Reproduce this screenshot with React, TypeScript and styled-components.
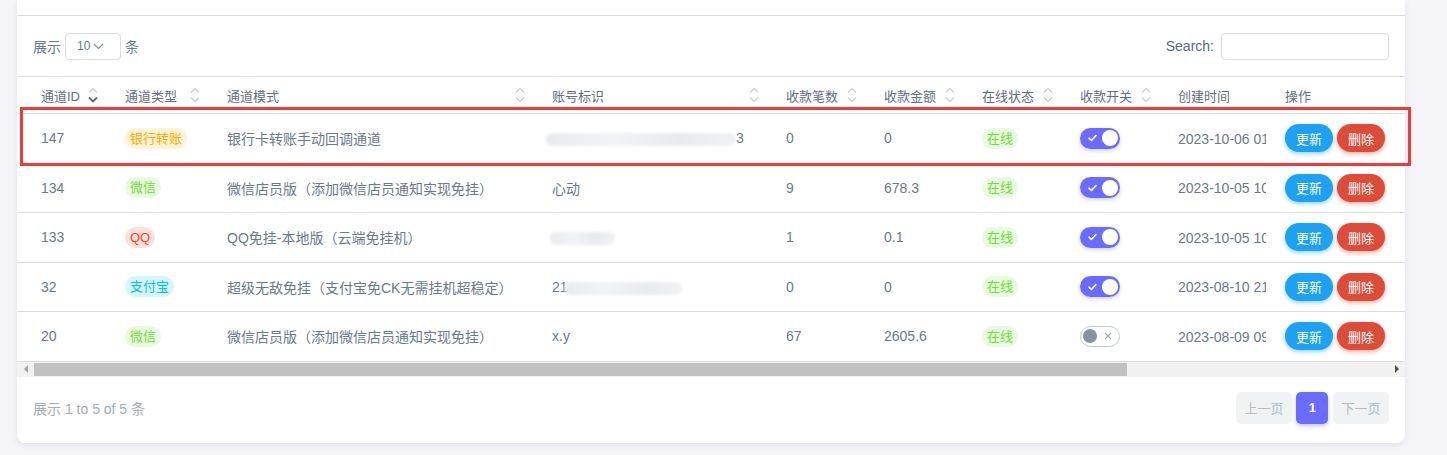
import React from "react";
import styled, { createGlobalStyle, css } from "styled-components";

const Global = createGlobalStyle`
  html, body { margin: 0; padding: 0; }
  body {
    background: #f5f5f9;
    font-family: "Liberation Sans", "Noto Sans CJK SC", sans-serif;
    color: #697a8d;
    -webkit-font-smoothing: antialiased;
  }
  * { box-sizing: border-box; }
`;

const Page = styled.div`
  position: relative;
  padding-left: 17px;
  height: 455px;
  overflow: hidden;
`;

const Card = styled.div`
  width: 1388px;
  background: #fff;
  border-radius: 0 0 8px 8px;
  box-shadow: 0 2px 6px 0 rgba(67, 89, 113, 0.12);
  overflow: hidden;
`;

const CardTop = styled.div`
  height: 16px;
  border-bottom: 1px solid #d9dee3;
`;

const Controls = styled.div`
  height: 61px;
  padding: 0 16px;
  display: flex;
  align-items: center;
  justify-content: space-between;
  border-bottom: 1px solid #d9dee3;
`;

const LengthLabel = styled.label`
  display: flex;
  align-items: center;
  gap: 4px;
  font-size: 14px;
  color: #697a8d;
`;

const SelectBox = styled.div`
  width: 56px;
  height: 27px;
  border: 1px solid #d9dee3;
  border-radius: 4px;
  display: flex;
  align-items: center;
  gap: 3px;
  padding-left: 11px;
  font-size: 12px;
  color: #697a8d;
`;

const SearchLabel = styled.label`
  display: flex;
  align-items: center;
  gap: 7px;
  font-size: 14px;
  color: #566a7f;
`;

const SearchInput = styled.input`
  width: 168px;
  height: 27px;
  border: 1px solid #d9dee3;
  border-radius: 4px;
  outline: none;
  padding: 0 8px;
  font: inherit;
`;

const TableScroll = styled.div`
  width: 100%;
  overflow: hidden;
`;

const Table = styled.table`
  width: 1720px;
  table-layout: fixed;
  border-collapse: separate;
  border-spacing: 0;
`;

const Th = styled.th<{ $sticky?: boolean }>`
  height: 37px;
  padding: 0 3px 0 24px;
  border-bottom: 1px solid #d9dee3;
  font-size: 13px;
  font-weight: normal;
  color: #5f6f82;
  text-align: left;
  white-space: nowrap;
  background: #fff;
  ${(p) =>
    p.$sticky &&
    css`
      position: sticky;
      right: 0;
      padding-left: 17px;
    `}
`;

const HeadInner = styled.div`
  display: flex;
  align-items: center;
  justify-content: space-between;
`;

const Td = styled.td<{ $sticky?: boolean }>`
  height: 49.5px;
  padding: 0 0 0 24px;
  border-bottom: 1px solid #d9dee3;
  font-size: 14px;
  color: #697a8d;
  white-space: nowrap;
  overflow: hidden;
  vertical-align: middle;
  background: #fff;
  ${(p) =>
    p.$sticky &&
    css`
      position: sticky;
      right: 0;
      padding-left: 17px;
    `}
`;

const TimeClip = styled.span`
  display: inline-block;
  max-width: 88px;
  overflow: hidden;
  vertical-align: middle;
  white-space: nowrap;
`;

type Tone = "warning" | "success" | "danger" | "info";
const tones: Record<Tone, { bg: string; fg: string }> = {
  warning: { bg: "#fff2d6", fg: "#ffab00" },
  success: { bg: "#e8fadf", fg: "#71dd37" },
  danger: { bg: "#ffe0db", fg: "#ff3e1d" },
  info: { bg: "#d7f5fc", fg: "#03c3ec" },
};

const Badge = styled.span<{ $tone: Tone }>`
  display: inline-flex;
  align-items: center;
  height: 21px;
  padding: 0 5px;
  border-radius: 11px;
  font-size: 13px;
  line-height: 1;
  background: ${(p) => tones[p.$tone].bg};
  color: ${(p) => tones[p.$tone].fg};
`;

const Smudge = styled.span<{ $w: number; $shift?: number }>`
  display: inline-block;
  vertical-align: middle;
  width: ${(p) => p.$w}px;
  height: 13px;
  margin-left: ${(p) => p.$shift ?? 0}px;
  border-radius: 6px;
  background: linear-gradient(
    90deg,
    rgba(228, 231, 235, 0.85),
    rgba(240, 242, 245, 0.95) 35%,
    rgba(231, 233, 237, 0.95) 70%,
    rgba(238, 240, 243, 0.9)
  );
  filter: blur(1.5px);
`;

const Switch = styled.span<{ $on: boolean }>`
  display: inline-flex;
  align-items: center;
  justify-content: space-between;
  width: 40px;
  height: 21px;
  border-radius: 11px;
  vertical-align: middle;
  ${(p) =>
    p.$on
      ? css`
          background: #696cff;
          padding: 0 2px 0 8px;
          box-shadow: 0 2px 4px 0 rgba(105, 108, 255, 0.3);
        `
      : css`
          background: #fff;
          border: 1px solid #c3c9d1;
          padding: 0 7px 0 2px;
        `}
`;

const Knob = styled.span<{ $on: boolean }>`
  width: ${(p) => (p.$on ? 16 : 14)}px;
  height: ${(p) => (p.$on ? 16 : 14)}px;
  border-radius: 50%;
  background: ${(p) => (p.$on ? "#fff" : "#8592a3")};
`;

const Actions = styled.div`
  display: flex;
  gap: 4px;
`;

const ActionButton = styled.button<{ $kind: "twitter" | "google" }>`
  height: 28px;
  padding: 0 11px;
  border: none;
  border-radius: 14px;
  font-family: inherit;
  font-size: 13px;
  color: #fff;
  cursor: pointer;
  ${(p) =>
    p.$kind === "twitter"
      ? css`
          background: #1da1f2;
          box-shadow: 0 2px 4px 0 rgba(29, 161, 242, 0.45);
        `
      : css`
          background: #dd4b39;
          box-shadow: 0 2px 4px 0 rgba(221, 75, 57, 0.45);
        `}
`;

const Scrollbar = styled.div`
  display: flex;
  height: 15px;
  background: #f1f1f1;
`;

const ScrollArrow = styled.div<{ $dir: "left" | "right" }>`
  width: 17px;
  display: flex;
  align-items: center;
  justify-content: center;
  &::before {
    content: "";
    width: 0;
    height: 0;
    border-top: 4px solid transparent;
    border-bottom: 4px solid transparent;
    ${(p) =>
      p.$dir === "left"
        ? css`
            border-right: 4px solid #a3a3a3;
          `
        : css`
            border-left: 4px solid #505050;
          `}
  }
`;

const ScrollTrack = styled.div`
  flex: 1;
  display: flex;
  align-items: center;
`;

const ScrollThumb = styled.div`
  height: 13px;
  background: #c1c1c1;
`;

const Footer = styled.div`
  height: 66px;
  padding: 0 16px 4px;
  display: flex;
  align-items: center;
  justify-content: space-between;
`;

const Info = styled.div`
  font-size: 14px;
  color: #a1acb8;
`;

const Pager = styled.div`
  display: flex;
  gap: 4.5px;
`;

const PageBtn = styled.span<{ $active?: boolean }>`
  height: 32px;
  min-width: 32px;
  padding: 0 8.5px;
  display: inline-flex;
  align-items: center;
  justify-content: center;
  border-radius: 5px;
  font-size: 13px;
  ${(p) =>
    p.$active
      ? css`
          background: #696cff;
          color: #fff;
          font-weight: bold;
          box-shadow: 0 2px 4px 0 rgba(105, 108, 255, 0.4);
        `
      : css`
          background: #f0f2f4;
          color: #b4bdc6;
        `}
`;

const Annotation = styled.div`
  position: absolute;
  left: 20px;
  top: 107px;
  width: 1391px;
  height: 59px;
  border: 3px solid #f03a3a;
  pointer-events: none;
`;

const SortIcon = ({ active }: { active?: "desc" }) => (
  <svg width="10" height="18" viewBox="0 0 10 18" fill="none">
    <path d="M1 6.5 L5 2.5 L9 6.5" stroke="#c9ced6" strokeWidth="1.3" />
    <path
      d="M1 11.5 L5 15.5 L9 11.5"
      stroke={active === "desc" ? "#566a7f" : "#c9ced6"}
      strokeWidth={active === "desc" ? 1.8 : 1.3}
    />
  </svg>
);

const Chevron = () => (
  <svg width="11" height="7" viewBox="0 0 11 7" fill="none">
    <path d="M1 1 L5.5 5.5 L10 1" stroke="#8592a3" strokeWidth="1.2" />
  </svg>
);

const Check = () => (
  <svg width="9" height="8" viewBox="0 0 9 8" fill="none">
    <path d="M1 4.2 L3.4 6.5 L8 1.5" stroke="#fff" strokeWidth="1.6" strokeLinecap="round" strokeLinejoin="round" />
  </svg>
);

const Cross = () => (
  <svg width="8" height="8" viewBox="0 0 8 8" fill="none">
    <path d="M1 1 L7 7 M7 1 L1 7" stroke="#a1acb8" strokeWidth="1.2" />
  </svg>
);

type Seg = { text: string } | { blur: number; shift?: number };

type Row = {
  id: number;
  type: string;
  tone: Tone;
  mode: string;
  account: Seg[];
  count: string;
  amount: string;
  on: boolean;
  time: string;
};

const rows: Row[] = [
  {
    id: 147,
    type: "银行转账",
    tone: "warning",
    mode: "银行卡转账手动回调通道",
    account: [{ blur: 190, shift: -6 }, { text: "3" }],
    count: "0",
    amount: "0",
    on: true,
    time: "2023-10-06 01",
  },
  {
    id: 134,
    type: "微信",
    tone: "success",
    mode: "微信店员版（添加微信店员通知实现免挂）",
    account: [{ text: "心动" }],
    count: "9",
    amount: "678.3",
    on: true,
    time: "2023-10-05 10",
  },
  {
    id: 133,
    type: "QQ",
    tone: "danger",
    mode: "QQ免挂-本地版（云端免挂机）",
    account: [{ blur: 65, shift: -2 }],
    count: "1",
    amount: "0.1",
    on: true,
    time: "2023-10-05 10",
  },
  {
    id: 32,
    type: "支付宝",
    tone: "info",
    mode: "超级无敌免挂（支付宝免CK无需挂机超稳定）",
    account: [{ text: "21" }, { blur: 118, shift: -4 }],
    count: "0",
    amount: "0",
    on: true,
    time: "2023-08-10 21",
  },
  {
    id: 20,
    type: "微信",
    tone: "success",
    mode: "微信店员版（添加微信店员通知实现免挂）",
    account: [{ text: "x.y" }],
    count: "67",
    amount: "2605.6",
    on: false,
    time: "2023-08-09 09",
  },
];

const columns: { label: string; width: number; sort?: boolean; active?: "desc" }[] = [
  { label: "通道ID", width: 84, sort: true, active: "desc" },
  { label: "通道类型", width: 102, sort: true },
  { label: "通道模式", width: 325, sort: true },
  { label: "账号标识", width: 234, sort: true },
  { label: "收款笔数", width: 98, sort: true },
  { label: "收款金额", width: 98, sort: true },
  { label: "在线状态", width: 98, sort: true },
  { label: "收款开关", width: 98, sort: true },
  { label: "创建时间", width: 446 },
  { label: "操作", width: 137 },
];

export default function App() {
  return (
    <>
      <Global />
      <Page>
        <Card>
          <CardTop />
          <Controls>
            <LengthLabel>
              展示
              <SelectBox>
                10
                <Chevron />
              </SelectBox>
              条
            </LengthLabel>
            <SearchLabel>
              Search:
              <SearchInput type="search" />
            </SearchLabel>
          </Controls>
          <TableScroll>
            <Table>
              <colgroup>
                {columns.map((c) => (
                  <col key={c.label} style={{ width: c.width }} />
                ))}
              </colgroup>
              <thead>
                <tr>
                  {columns.map((c, i) => (
                    <Th key={c.label} $sticky={i === columns.length - 1}>
                      <HeadInner>
                        <span>{c.label}</span>
                        {c.sort && <SortIcon active={c.active} />}
                      </HeadInner>
                    </Th>
                  ))}
                </tr>
              </thead>
              <tbody>
                {rows.map((r) => (
                  <tr key={r.id}>
                    <Td>{r.id}</Td>
                    <Td>
                      <Badge $tone={r.tone}>{r.type}</Badge>
                    </Td>
                    <Td>{r.mode}</Td>
                    <Td>
                      {r.account.map((s, i) =>
                        "text" in s ? (
                          <span key={i}>{s.text}</span>
                        ) : (
                          <Smudge key={i} $w={s.blur} $shift={s.shift} />
                        )
                      )}
                    </Td>
                    <Td>{r.count}</Td>
                    <Td>{r.amount}</Td>
                    <Td>
                      <Badge $tone="success">在线</Badge>
                    </Td>
                    <Td>
                      <Switch $on={r.on}>
                        {r.on ? (
                          <>
                            <Check />
                            <Knob $on />
                          </>
                        ) : (
                          <>
                            <Knob $on={false} />
                            <Cross />
                          </>
                        )}
                      </Switch>
                    </Td>
                    <Td>
                      <TimeClip>{r.time}</TimeClip>
                    </Td>
                    <Td $sticky>
                      <Actions>
                        <ActionButton $kind="twitter">更新</ActionButton>
                        <ActionButton $kind="google">删除</ActionButton>
                      </Actions>
                    </Td>
                  </tr>
                ))}
              </tbody>
            </Table>
          </TableScroll>
          <Scrollbar>
            <ScrollArrow $dir="left" />
            <ScrollTrack>
              <ScrollThumb style={{ width: "80.7%" }} />
            </ScrollTrack>
            <ScrollArrow $dir="right" />
          </Scrollbar>
          <Footer>
            <Info>展示 1 to 5 of 5 条</Info>
            <Pager>
              <PageBtn>上一页</PageBtn>
              <PageBtn $active>1</PageBtn>
              <PageBtn>下一页</PageBtn>
            </Pager>
          </Footer>
        </Card>
        <Annotation />
      </Page>
    </>
  );
}
